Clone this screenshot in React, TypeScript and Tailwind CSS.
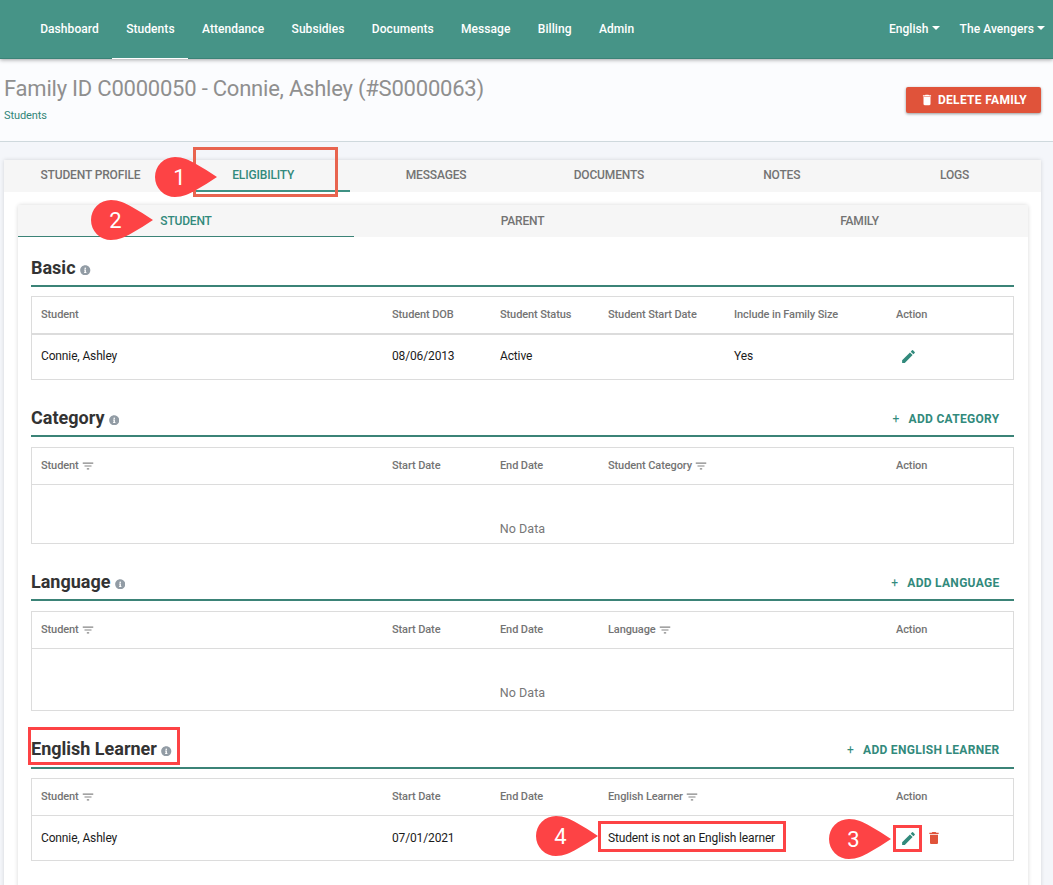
import clsx from 'clsx'
import { FaInfoCircle } from 'react-icons/fa'
import { MdDelete, MdEdit, MdFilterList } from 'react-icons/md'
import type { ReactNode } from 'react'

const NAV = ['Dashboard', 'Students', 'Attendance', 'Subsidies', 'Documents', 'Message', 'Billing', 'Admin']
const TABS = ['STUDENT PROFILE', 'ELIGIBILITY', 'MESSAGES', 'DOCUMENTS', 'NOTES', 'LOGS']
const SUB_TABS = ['STUDENT', 'PARENT', 'FAMILY']

const BASIC_GRID = 'grid-cols-[351px_108px_108px_126px_162px_1fr]'
const DATED_GRID = 'grid-cols-[351px_108px_108px_288px_1fr]'

function Caret() {
  return <span className="ml-[3px] mb-[3px] border-x-4 border-t-4 border-x-transparent border-t-white" />
}

function Header() {
  return (
    <header className="relative z-10 flex h-[59px] shrink-0 justify-between border-b border-[#3b8377] bg-[#469487] pl-[26.5px] pr-[8px] text-[12px] font-medium tracking-[0.06px] text-white shadow-[0_1px_4px_rgba(0,0,0,0.35)]">
      <nav className="flex">
        {NAV.map((item) => (
          <a
            key={item}
            className={clsx('-mb-px flex items-center border-b px-[13.7px]', item === 'Students' ? 'border-white' : 'border-transparent')}
          >
            {item}
          </a>
        ))}
      </nav>
      <div className="flex items-center gap-[20px]">
        <span className="flex items-center">English<Caret /></span>
        <span className="flex items-center">The Avengers<Caret /></span>
      </div>
    </header>
  )
}

function TitleBar() {
  return (
    <div className="flex h-[83px] shrink-0 justify-between border-b border-[#cfd9dd] bg-[#fbfcfe] pl-1 pr-3">
      <div>
        <h1 className="mt-4 text-[22px] leading-[28px] tracking-[-0.22px] text-[#8f8f8f]">Family ID C0000050 - Connie, Ashley (#S0000063)</h1>
        <a className="mt-[5px] block text-[11px] leading-4 tracking-[-0.1px] text-[#328679]">Students</a>
      </div>
      <button className="mt-7 flex h-[26px] w-[135px] items-center justify-center rounded-[2px] bg-[#e0533a] text-[12px] font-bold tracking-[0.32px] text-white shadow-[0_1px_3px_rgba(0,0,0,0.4)]">
        <MdDelete size={14} className="mr-1" />
        DELETE FAMILY
      </button>
    </div>
  )
}

interface SectionProps {
  title: string
  action?: string
  className?: string
  headHeight?: string
  children: ReactNode
}

function Section({ title, action, className, headHeight = 'h-[34px]', children }: SectionProps) {
  return (
    <section className={className}>
      <div className={clsx('flex items-start justify-between border-b-2 border-[#3b8377] pr-[14.5px]', headHeight)}>
        <h2 className="mt-[2px] flex items-center text-[18px] font-bold leading-[26px] text-[#333]">
          {title}
          <FaInfoCircle size={10.5} className="ml-[4.5px] mt-[4px] text-[#929ca5]" />
        </h2>
        {action && (
          <button className="mt-[2px] flex items-center text-[12px] font-bold leading-[28px] tracking-[0.3px] text-[#328a7c]">
            <span className="mr-[9px] font-normal">+</span>
            {action}
          </button>
        )}
      </div>
      {children}
    </section>
  )
}

function Th({ children, filter }: { children: ReactNode; filter?: boolean }) {
  return (
    <div className="flex items-center pl-[9px] text-[11px] font-medium tracking-[-0.1px] text-[#747474]">
      {children}
      {filter && <MdFilterList size={14} className="mb-px ml-[2px] text-[#858585]" />}
    </div>
  )
}

function Td({ children }: { children?: ReactNode }) {
  return <div className="flex items-center pl-[9px] text-[12px] tracking-[-0.14px] text-[#1b1b1b]">{children}</div>
}

function DatedHead({ label }: { label: string }) {
  return (
    <div className={clsx('grid h-[37px] border-b border-[#dcdcdc]', DATED_GRID)}>
      <Th filter>Student</Th>
      <Th>Start Date</Th>
      <Th>End Date</Th>
      <Th filter>{label}</Th>
      <Th>Action</Th>
    </div>
  )
}

function EmptyTable({ label, className }: { label: string; className: string }) {
  return (
    <div className={clsx('flex flex-col border border-[#dcdcdc]', className)}>
      <DatedHead label={label} />
      <p className="mt-[35px] text-center text-[12.5px] leading-[18px] tracking-[0.05px] text-[#777]">No Data</p>
    </div>
  )
}

function Pin({ n, className }: { n: number; className: string }) {
  return (
    <div className={clsx('absolute h-10 w-[62px] text-[#fd4345]', className)}>
      <svg viewBox="0 0 62 40" className="absolute inset-0 h-full w-full" fill="currentColor">
        <path d="M20 0C28 0 34 3 41 7Q51 12.500 62 20Q51 27.500 41 33C34 37 28 40 20 40A20 20 0 0 1 20 0Z" />
      </svg>
      <span className="relative flex h-10 w-[49px] items-center justify-center text-[22px] text-white">{n}</span>
    </div>
  )
}

export default function App() {
  return (
    <div className="relative flex h-[885px] w-[1053px] flex-col overflow-hidden bg-[#f4f6fa] font-[Roboto,sans-serif]">
      <Header />
      <TitleBar />

      <main className="ml-1 mt-[18px] w-[1037px] grow bg-white shadow-[0_0_4px_rgba(0,0,0,0.14)]">
        <div className="grid h-8 grid-cols-6 bg-[#f6f6f6] text-[12px] font-medium tracking-[-0.15px] text-[#737373]">
          {TABS.map((tab) => (
            <div
              key={tab}
              className={clsx('flex items-center justify-center border-b-2', tab === 'ELIGIBILITY' ? 'border-[#3f9183] text-[#328a7c]' : 'border-transparent')}
            >
              {tab}
            </div>
          ))}
        </div>

        <div className="ml-[14px] mt-[13px] h-[700px] w-[1010px] rounded-t-[3px] bg-white shadow-[0_0_4px_rgba(0,0,0,0.16)]">
          <div className="grid h-8 grid-cols-[336px_337px_337px] bg-[#f6f6f6] text-[12px] font-medium tracking-[-0.2px] text-[#737373]">
            {SUB_TABS.map((tab) => (
              <div
                key={tab}
                className={clsx('flex items-center justify-center border-b pt-px', tab === 'STUDENT' ? 'border-[#3b8377] text-[#328a7c]' : 'border-transparent')}
              >
                {tab}
              </div>
            ))}
          </div>

          <div className="ml-[13px] w-[983px] pt-[16px]">
            <Section title="Basic">
              <div className="mt-[9px] h-[84px] border border-[#dcdcdc]">
                <div className={clsx('grid h-[38px] border-b-2 border-[#dcdcdc]', BASIC_GRID)}>
                  <Th>Student</Th>
                  <Th>Student DOB</Th>
                  <Th>Student Status</Th>
                  <Th>Student Start Date</Th>
                  <Th>Include in Family Size</Th>
                  <Th>Action</Th>
                </div>
                <div className={clsx('grid h-[42px]', BASIC_GRID)}>
                  <Td>Connie, Ashley</Td>
                  <Td>08/06/2013</Td>
                  <Td>Active</Td>
                  <Td />
                  <Td>Yes</Td>
                  <Td><MdEdit size={17} className="ml-1 text-[#328a7c]" /></Td>
                </div>
              </div>
            </Section>

            <Section title="Category" action="ADD CATEGORY" className="mt-[23px]">
              <EmptyTable label="Student Category" className="mt-[10px] h-[97px]" />
            </Section>

            <Section title="Language" action="ADD LANGUAGE" className="mt-[23px]">
              <EmptyTable label="Language" className="mt-[10px] h-[100px]" />
            </Section>

            <Section title="English Learner" action="ADD ENGLISH LEARNER" className="mt-[23px]" headHeight="h-[35px]">
              <div className="mt-[9px] h-[83px] border border-[#dcdcdc]">
                <DatedHead label="English Learner" />
                <div className={clsx('grid h-[44px]', DATED_GRID)}>
                  <Td>Connie, Ashley</Td>
                  <Td>07/01/2021</Td>
                  <Td />
                  <Td>Student is not an English learner</Td>
                  <Td>
                    <MdEdit size={17} className="ml-1 text-[#328a7c]" />
                    <MdDelete size={16} className="ml-[9px] text-[#e0533a]" />
                  </Td>
                </div>
              </div>
            </Section>
          </div>
        </div>
      </main>

      {/* Walkthrough callouts */}
      <div className="absolute left-[193px] top-[147px] h-[50px] w-[145px] border-3 border-[#e8644f]" />
      <div className="absolute left-[28px] top-[727px] h-[38px] w-[152px] border-3 border-[#fd4345]" />
      <div className="absolute left-[598px] top-[821px] h-[31px] w-[188px] border-3 border-[#fd4345]" />
      <div className="absolute left-[893px] top-[825px] h-[27px] w-[29px] border-3 border-[#fd4345]" />
      <Pin n={1} className="left-[155px] top-[157px]" />
      <Pin n={2} className="left-[91px] top-[200px]" />
      <Pin n={3} className="left-[829px] top-[819px]" />
      <Pin n={4} className="left-[536px] top-[816px]" />
    </div>
  )
}
